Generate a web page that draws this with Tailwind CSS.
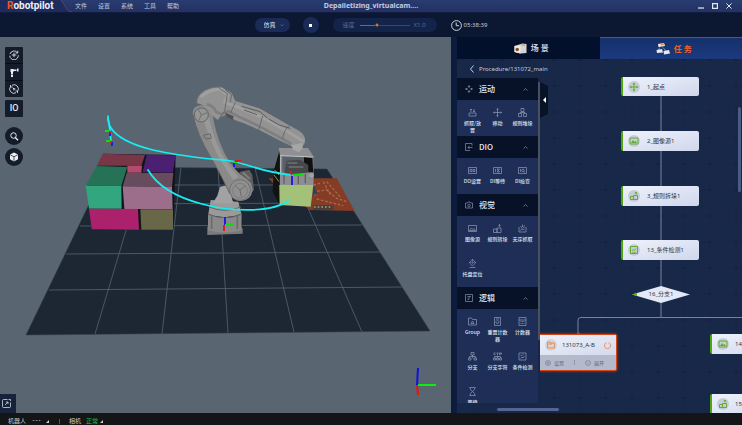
<!DOCTYPE html>
<html lang="zh-CN">
<head>
    <meta charset="UTF-8">
    <meta name="viewport" content="width=device-width, initial-scale=1.0">
    <title>Robotpilot</title>
    <script src="https://cdn.jsdelivr.net/npm/@tailwindcss/browser@4"></script>
</head>
<body class="h-screen flex flex-col overflow-hidden bg-[#0c1834] text-[6px] leading-[8px] text-[#c3cbdc] font-['Noto_Sans','Noto_Sans_CJK_SC',sans-serif]">

    <!-- Barra de título y menú -->
    <header class="h-[13px] shrink-0 grid grid-cols-[1fr_auto_1fr] items-center bg-linear-to-b from-[#283c70] to-[#243163] border-b border-[#111c40]">
        <div class="flex items-center h-full">
            <div class="relative w-[75px] h-full flex items-center pl-[7px]">
                <svg class="absolute inset-0 w-full h-full" viewBox="0 0 75 12" preserveAspectRatio="none">
                    <path d="M0 0H61L69 12H0z" fill="#1d2c5d"/>
                    <path d="M61 0L67 9Q69 12 72 12" fill="none" stroke="#6a4763" stroke-width=".8"/>
                </svg>
                <h1 class="relative font-['Roboto'] font-bold text-[10px] leading-[10px] text-[#eef1f8]"><span class="text-[#f0591d]">R</span>obotpilot</h1>
            </div>
            <nav class="flex gap-[11px] font-['Noto_Sans_CJK_SC']">
                <a href="#">文件</a>
                <a href="#">设置</a>
                <a href="#">系统</a>
                <a href="#">工具</a>
                <a href="#">帮助</a>
            </nav>
        </div>
        <h2 class="font-['Noto_Sans'] font-bold text-[7px] text-[#c2cbe8]">Depalletizing_virtualcam....</h2>
        <div class="flex justify-end items-center gap-2 pr-[10px]">
            <button aria-label="最小化"><svg class="w-[6px] h-[6px]" viewBox="0 0 6 6"><path d="M0 5H6" stroke="#e3e8f5" stroke-width="1.2"/></svg></button>
            <button aria-label="最大化"><svg class="w-[6px] h-[6px]" viewBox="0 0 6 6"><path d="M.6.6H5.4V5.4H.6z" fill="none" stroke="#e3e8f5" stroke-width="1.2"/></svg></button>
            <button aria-label="关闭"><svg class="w-[6px] h-[6px]" viewBox="0 0 6 6"><path d="M.4.4L5.6 5.6M5.6.4L.4 5.6" stroke="#e3e8f5"/></svg></button>
        </div>
    </header>

    <!-- Controles de simulación -->
    <div class="h-6 shrink-0 flex justify-center items-center bg-[#0c1831]">
        <div class="relative">
            <select aria-label="模式" class="block w-[35px] h-[14px] appearance-none rounded-full bg-[#1a2b57] pl-[9px] text-[6px] text-[#e2e7f3] font-['Noto_Sans_CJK_SC']">
                <option>仿真</option>
            </select>
            <svg class="absolute right-[6px] top-[6px] w-[4px] h-[3px] pointer-events-none" viewBox="0 0 4 3"><path d="M.5.5L2 2L3.5.5" fill="none" stroke="#60709a" stroke-width=".7"/></svg>
        </div>
        <button aria-label="停止" class="ml-[13px] w-4 h-4 rounded-full bg-[#1a2b57] flex items-center justify-center">
            <span class="w-[3px] h-[3px] bg-white"></span>
        </button>
        <div class="ml-[14px] w-[104px] h-[14px] rounded-full bg-[#14234a] flex items-center pl-[10px] pr-[11px] text-[#5b6b90]">
            <label for="speed" class="font-['Noto_Sans_CJK_SC']">速度</label>
            <input id="speed" type="range" value="34" class="ml-[5px] mr-1 flex-1 min-w-0 h-px appearance-none bg-linear-to-r from-[#a06026] from-34% to-[#37486c] to-34% [&::-webkit-slider-thumb]:appearance-none [&::-webkit-slider-thumb]:w-[4px] [&::-webkit-slider-thumb]:h-[4px] [&::-webkit-slider-thumb]:rounded-full [&::-webkit-slider-thumb]:bg-[#d99a4c] [&::-webkit-slider-thumb]:border [&::-webkit-slider-thumb]:border-[#5a4330]">
            <span>X1.0</span>
        </div>
        <svg class="ml-[14px] w-[11px] h-[11px]" viewBox="0 0 11 11" fill="none" stroke="#ccd2de"><circle cx="5.500" cy="5.500" r="4.900"/><path d="M5.200 2.500V5.700H8"/></svg>
        <time class="ml-[2px]">05:38:39</time>
    </div>

    <main class="flex-1 min-h-0 flex">
        <!-- Vista 3D -->
        <section class="relative flex-1 min-w-0 bg-[#596570]">
            <svg class="absolute inset-0 w-full h-full" viewBox="0 37 451 376" preserveAspectRatio="xMidYMid slice">
                <path d="M107 167L327 169L430 331L26 335z" fill="#1d2733"/>
                <g stroke="#566470" stroke-width=".8" fill="none">
                    <path d="M145 167L95 334M181 167L162 334M218 168L228 333M255 168L294 332M291 169L362 332"/>
                    <path d="M98 185H337M90 204L348 203M80 226L362 225M66 254L380 252M49 290L403 287"/>
                    <path d="M107 167L327 169L430 331L26 335z" stroke="#35414d" stroke-width=".5"/>
                </g>
                <!-- Cajas apiladas -->
                <g transform="translate(0 40) scale(.33333)">
                    <path d="M310 341L527 345L520 568L275 568L262 440z" fill="#11131a"/>
                    <path d="M309 341L435 345L424 377L290 377z" fill="#793649"/>
                    <path d="M382 377H426L424 398H382z" fill="#b44a6d"/>
                    <path d="M440 345L527 346L518 398L428 396z" fill="#4b2073"/>
                    <path d="M290 378L382 381L364 438L257 437z" fill="#267257"/>
                    <path d="M257 437L364 438L365 506L267 506z" fill="#32a67e"/>
                    <path d="M380 398L520 399L516 441L368 439z" fill="#674c5d"/>
                    <path d="M368 439L516 441L518 507L373 507z" fill="#9c6e8c"/>
                    <path d="M267 506L414 507L417 569L275 568z" fill="#ab216c"/>
                    <path d="M421 508H519V569H424z" fill="#686747"/>
                </g>
                <!-- Robot y pinza -->
                <g transform="translate(180 75) scale(.33333)" stroke-linejoin="round">
                    <path d="M265 310L470 310L524 408L390 405L285 330z" fill="#853c25"/>
                    <path d="M398 350L440 345L470 370L500 380M410 372L490 392M430 320L450 358M400 330L420 325M440 320L480 365" stroke="#a8694c" stroke-width="4" stroke-dasharray="8 5" fill="none"/>
                    <path d="M398 390H460V404L400 405z" fill="#46403a"/>
                    <path d="M402 396H456M404 345V365" stroke="#a39c83" stroke-width="5" stroke-dasharray="5 6"/>
                    <path d="M400 330L412 355L398 362z" fill="#2b4163"/>
                    <path d="M300 222L281 288L278 350L298 388z" fill="#10130f"/>
                    <path d="M284 285L297 300M282 300L297 320" stroke="#7f986c" stroke-width="3"/>
                    <path d="M300 219H384L401 245V332H300z" fill="#717376"/>
                    <path d="M308 243H372V290H308z" fill="#58616a"/>
                    <path d="M372 246L397 249L400 300L372 283z" fill="#0f1012"/>
                    <path d="M296 219H384L401 245L300 242z" fill="#8f9093"/>
                    <path d="M300 242L400 246" stroke="#c4c4c4" stroke-width="3"/>
                    <path d="M302 244V330" stroke="#b3b3b3" stroke-width="4"/>
                    <path d="M320 257L360 254L385 270V300H312z" fill="#45474b"/>
                    <path d="M322 264H352M326 276H370" stroke="#6f7175" stroke-width="4"/>
                    <path d="M300 300L400 292V332H300z" fill="#8d8e91"/>
                    <path d="M312 298V326M355 302V328M376 296V325M390 290V310" stroke="#5d5f63" stroke-width="4"/>
                    <circle cx="394" cy="301" r="8" fill="#a0a0a0"/>
                    <path d="M298 330L400 330L392 395L299 390z" fill="#a3c179"/>
                    <!-- base -->
                    <path d="M82 455L95 448H180L188 462V476L82 480z" fill="#7a7a7a"/>
                    <path d="M84 418Q135 440 185 416L184 466Q135 480 84 466z" fill="#898989"/>
                    <path d="M92 375L175 380L184 416Q135 437 85 417z" fill="#9a9a9a"/>
                    <path d="M88 396Q133 416 183 396M85 418Q135 438 185 418" fill="none" stroke="#666" stroke-width="3"/>
                    <path d="M95 424V462M172 424V462" stroke="#6b6b6b" stroke-width="5"/>
                    <path d="M120 335L145 330L160 385H98L112 362z" fill="#a2a2a2"/>
                    <path d="M180 290L208 284L217 300L222 345L200 370L165 330z" fill="#5e5e5e"/>
                    <path d="M188 292L210 312M183 302L214 328" stroke="#858585" stroke-width="5"/>
                    <!-- brazo inferior -->
                    <path d="M38 116Q37 94 62 91Q96 90 98 120Q107 175 125 215Q140 258 186 304Q216 318 218 345Q213 378 180 378Q157 376 149 356Q130 312 92 246Q53 183 38 116z" fill="#8a8a8a"/>
                    <path d="M86 125Q99 178 116 217Q133 260 176 306L160 315Q120 260 97 207Q80 165 72 140z" fill="#999"/>
                    <path d="M38 116Q53 183 92 246Q130 312 149 356" fill="none" stroke="#666" stroke-width="3"/>
                    <circle cx="64" cy="120" r="21" fill="#959595" stroke="#666" stroke-width="3"/>
                    <path d="M64 120L55 103M64 120L81 113M64 120L56 137" stroke="#707070" stroke-width="3"/>
                    <path d="M70 181L90 176L94 190L78 192z" fill="none" stroke="#666" stroke-width="3"/>
                    <circle cx="180" cy="345" r="31" fill="#909090" stroke="#707070" stroke-width="3"/>
                    <circle cx="180" cy="347" r="22" fill="none" stroke="#727272" stroke-width="2"/>
                    <path d="M180 345L165 331M180 345L196 333M180 345L184 365" stroke="#6c6c6c" stroke-width="3"/>
                    <!-- brazo superior -->
                    <path d="M50 84Q48 62 75 45Q99 32 124 36L155 54L166 78L238 100L322 148L357 167Q378 181 375 200Q373 214 355 219L335 214L302 198L238 165L192 145L164 135L142 118L122 126L114 136L94 119Q82 91 50 84z" fill="#939393"/>
                    <path d="M62 66Q85 44 122 42L143 60L134 82L162 92L236 122L320 168L372 200" fill="none" stroke="#a0a0a0" stroke-width="9"/>
                    <path d="M80 88Q99 90 109 111L124 118L145 108L176 125L238 154L301 188L334 207" fill="none" stroke="#7f7f7f" stroke-width="8"/>
                    <path d="M118 40L142 56L134 108L114 135M135 43L155 59L151 82M166 82L151 115M248 123L236 164M327 152Q310 168 308 192" fill="none" stroke="#696969" stroke-width="3"/>
                    <path d="M185 94L240 110L263 130M266 132L300 151L331 160M192 105L231 119" fill="none" stroke="#5c5c5c" stroke-width="3"/>
                    <path d="M134 112L161 124L158 134L142 126z" fill="#505050"/>
                    <path d="M50 84Q48 62 75 45Q99 32 124 36" fill="none" stroke="#666" stroke-width="3"/>
                    <path d="M334 211L368 203V220L357 232L340 225z" fill="#a6a6a6"/>
                </g>
                <!-- Trayectoria -->
                <g fill="none" stroke="#17eef2" stroke-width="1.7" stroke-linecap="round">
                    <path d="M108 116C108 121 109 125 111 128C124 148 170 154 202 158C218 160 228 160 236 162C256 167 266 173 293 175"/>
                    <path d="M108 118L110 130L111 142"/>
                    <path d="M148 170C158 187 179 198 202 204C231 212 273 213 289 200"/>
                </g>
                <!-- Ejes -->
                <g fill="none" stroke-width="1.8">
                    <path d="M110 132V136M112 142V146M225 217V226M234 162V167M292 176V185" stroke="#1414e6"/>
                    <path d="M105 131H110M106 141H111M225 225H233M233 162H237M293 175H303" stroke="#0be00b"/>
                    <path d="M224 225V231M235 161H241M290 171L292 175M110 131V133M111 141V143" stroke="#e81414"/>
                    <path d="M418 385H436" stroke="#0cef0c" stroke-width="2"/>
                    <path d="M417 385L418 368" stroke="#1111dd" stroke-width="2"/>
                    <path d="M417 385L418 395" stroke="#ef1111" stroke-width="2"/>
                </g>
            </svg>

            <div class="absolute left-[5px] top-[10px] flex flex-col items-center gap-[3px]">
                <div class="w-[18px] rounded-[1px] bg-[#141c2b] divide-y divide-[#080d18]">
                    <button aria-label="旋转视图" class="w-full h-[17px] flex items-center justify-center"><svg class="w-[10px] h-[10px]" viewBox="0 0 20 20" fill="none" stroke="#e6e8ec" stroke-width="1.700"><path d="M17 5.500A8.500 8.500 0 0 0 2 8M1.500 11.500A8.500 8.500 0 0 0 18.500 10.500M17.500 1.500V6H13"/><path d="M10 5.500V14.500M5.500 10H14.500"/></svg></button>
                    <button aria-label="机器人" class="w-full h-[17px] flex items-center justify-center"><svg class="w-[9px] h-[9px]" viewBox="0 0 18 18" fill="#eceef1"><path d="M1 2H7V8H1zM7 3H13V6H7zM14 1H17V7H14zM2 8H6V12H2zM2 13H6V18H2z"/></svg></button>
                    <button aria-label="重置视图" class="w-full h-[16px] flex items-center justify-center"><svg class="w-[10px] h-[10px]" viewBox="0 0 20 20" fill="none" stroke="#e6e8ec" stroke-width="1.700"><path d="M6 2.500A8.500 8.500 0 0 1 17 15M14 17.500A8.500 8.500 0 0 1 3 5M3 2V6H7M17 18V14H13"/><path d="M7 7L14 10L11 11L10 14z" fill="#e6e8ec" stroke="none"/></svg></button>
                </div>
                <button class="w-[18px] h-[17px] rounded-[1px] bg-[#141c2b] font-['Roboto'] font-medium text-[9px] leading-[17px] text-[#e6e8ec]">IO</button>
                <button aria-label="搜索" class="mt-[7px] w-[18px] h-[18px] rounded-full bg-[#141c2b] flex items-center justify-center"><svg class="w-[9px] h-[9px]" viewBox="0 0 18 18"><circle cx="7" cy="7" r="5.500" fill="none" stroke="#e6e8ec" stroke-width="2"/><path d="M10.500 11L16 16.500" stroke="#e6e8ec" stroke-width="3"/></svg></button>
                <button aria-label="模型" class="w-[18px] h-[18px] rounded-full bg-[#141c2b] flex items-center justify-center"><svg class="w-[10px] h-[10px]" viewBox="0 0 20 20"><path d="M10 1L18 5V14.500L10 19L2 14.500V5z" fill="#eceef1"/><path d="M2.500 5.500L10 9.500L17.500 5.500M10 9.500V18.500" stroke="#141c2b" stroke-width="1.500" fill="none"/></svg></button>
            </div>

            <button aria-label="展开视图" class="absolute left-0 bottom-0 w-4 h-[19px] bg-[#17233a] flex items-center justify-center pr-[3px]"><svg class="w-[9px] h-[9px]" viewBox="0 0 18 18" fill="none" stroke="#d5d9e0" stroke-width="1.600"><path d="M11 1H3Q1 1 1 3V15Q1 17 3 17H15Q17 17 17 15V7M13 1H17V4"/><path d="M6 12L12 6M8 6H12V10"/></svg></button>
        </section>

        <!-- Panel de tareas -->
        <section class="w-[291px] shrink-0 pl-[6px] bg-[#0d1c3c] flex flex-col">
            <div class="h-[22px] shrink-0 grid grid-cols-2 font-['Noto_Sans_CJK_SC'] font-bold text-[8px] leading-[10px]">
                <a href="#" class="flex items-center justify-center gap-[4px] pl-[6px] bg-[#03102c] text-[#c9d0de]">
                    <svg class="w-[13px] h-[11px]" viewBox="0 0 26 22"><path d="M1 6L17 1L25 2V20L13 21L1 18z" fill="#d5d4d2"/><path d="M1 6L13 5V21L1 18z" fill="#eeeae4"/><circle cx="6.500" cy="13" r="3.500" fill="#7c4c28"/><path d="M15 4H22" stroke="#c48b5d" stroke-width="2"/></svg>
                    <span>场 景</span>
                </a>
                <a href="#" class="flex items-center justify-center gap-[4px] pl-[6px] bg-linear-to-b from-[#15306b] to-[#1b3a7e] border-t border-[#7b4c4d] text-[#f0611f]">
                    <svg class="w-[14px] h-[12px]" viewBox="0 0 28 24"><path d="M7 9L5 15M14 9L20 16" stroke="#a6adbd" stroke-width="1.500"/><path d="M4 2L16 0L18 6L5 8z" fill="#f2ece6"/><path d="M9 2L16 1L17 4L10 5z" fill="#df8a42"/><path d="M1 14L12 12L14 19L2 20z" fill="#e9e9ec"/><path d="M15 16L26 14L28 21L16 23z" fill="#e9e9ec"/></svg>
                    <span>任 务</span>
                </a>
            </div>

            <div class="relative flex-1 min-h-0 overflow-hidden bg-[#182848]">
                <!-- Diagrama de flujo -->
                <div class="absolute inset-0 text-[#30343d]">
                    <svg class="absolute inset-0 w-full h-full">
                        <defs>
                            <pattern id="grid" x="6" y="14" width="26" height="26" patternUnits="userSpaceOnUse">
                                <path d="M13 0V26M0 13H26" stroke="#172645" stroke-width="1"/>
                                <rect x="12" y="12" width="2" height="2" fill="#13213f"/>
                            </pattern>
                        </defs>
                        <rect width="100%" height="100%" fill="url(#grid)"/>
                        <path d="M204 30V258.500M121 276V261Q121 258.500 124 258.500H285" fill="none" stroke="#75839f"/>
                        <path d="M175 235.500L204 227L233 235.500L204 244z" fill="#e3e8f6"/>
                        <path d="M175 235.500L180 234V237z" fill="#55b112"/>
                    </svg>

                    <div class="absolute left-[164px] top-[18px] w-[78px] h-[19px] rounded-[2px] border-l-2 border-[#4da80d] bg-linear-to-br from-[#eef2fc] to-[#cfd7ec] flex items-center pl-[5px] gap-[7px]">
                        <svg class="w-[12px] h-[12px]" viewBox="0 0 24 24"><circle cx="12" cy="12" r="12" fill="#c6ccd8"/><path d="M12 4V20M4 12H20" stroke="#65ac2a" stroke-width="2"/><path d="M9 7L12 3L15 7zM9 17L12 21L15 17zM7 9L3 12L7 15zM17 9L21 12L17 15z" fill="#65ac2a"/></svg>
                        <span>1_起点</span>
                    </div>
                    <div class="absolute left-[164px] top-[72px] w-[78px] h-5 rounded-[2px] border-l-2 border-[#4da80d] bg-linear-to-br from-[#eef2fc] to-[#cfd7ec] flex items-center pl-[5px] gap-[7px]">
                        <svg class="w-[12px] h-[12px]" viewBox="0 0 24 24"><circle cx="12" cy="12" r="12" fill="#c6ccd8"/><path d="M4 6H20V18H4z" fill="none" stroke="#65ac2a" stroke-width="2"/><path d="M6 16L10 10L13 14L15 12L18 16z" fill="#65ac2a"/></svg>
                        <span>2_图像源1</span>
                    </div>
                    <div class="absolute left-[164px] top-[127px] w-[78px] h-5 rounded-[2px] border-l-2 border-[#4da80d] bg-linear-to-br from-[#eef2fc] to-[#cfd7ec] flex items-center pl-[5px] gap-[7px]">
                        <svg class="w-[12px] h-[12px]" viewBox="0 0 24 24"><circle cx="12" cy="12" r="12" fill="#c6ccd8"/><path d="M5 13H11V19H5zM11 11H19V19H11zM16 9V4M13.500 6.500L16 4L18.500 6.500" fill="none" stroke="#65ac2a" stroke-width="2"/></svg>
                        <span>3_规则拆垛1</span>
                    </div>
                    <div class="absolute left-[164px] top-[181px] w-[78px] h-5 rounded-[2px] border-l-2 border-[#4da80d] bg-linear-to-br from-[#eef2fc] to-[#cfd7ec] flex items-center pl-[5px] gap-[7px]">
                        <svg class="w-[12px] h-[12px]" viewBox="0 0 24 24"><circle cx="12" cy="12" r="12" fill="#c6ccd8"/><path d="M5 5H19V19H5z" fill="none" stroke="#65ac2a" stroke-width="2"/><path d="M8 14L11 10L13 13L16 9M8 16.500H16" fill="none" stroke="#65ac2a" stroke-width="1.500"/></svg>
                        <span>13_条件检测1</span>
                    </div>
                    <span class="absolute left-[175px] top-[231px] w-[58px] text-center">16_分支1</span>

                    <div class="absolute left-[76px] top-[275px] w-[84px] h-[37px] rounded-[2px] border border-[#d4471b] shadow-[0_0_3px_#c2411c] bg-[#b3bacb] flex flex-col">
                        <div class="h-5 bg-linear-to-br from-[#eef2fc] to-[#d4daeb] flex items-center pl-[11px] pr-[5px] gap-[5px]">
                            <svg class="w-[12px] h-[12px]" viewBox="0 0 24 24"><circle cx="12" cy="12" r="12" fill="#d3d4dc"/><path d="M5 6H10L12 8H19V18H5zM5 10H14V8" fill="none" stroke="#ef8f4c" stroke-width="2"/></svg>
                            <span class="flex-1">131073_A-B</span>
                            <svg class="w-[7px] h-[7px]" viewBox="0 0 14 14"><path d="M9 1.500A6 6 0 1 1 5 1.500" fill="none" stroke="#e58558" stroke-width="1.800"/></svg>
                        </div>
                        <div class="flex-1 flex items-center pl-[11px] text-[#646b79] text-[5px]">
                            <button class="flex items-center gap-[3px]"><svg class="w-[6px] h-[6px]" viewBox="0 0 12 12" fill="none" stroke="#7d8391" stroke-width="1.500"><circle cx="6" cy="6" r="5"/><circle cx="6" cy="6" r="2"/></svg>设置</button>
                            <span class="ml-[10px] w-px h-[5px] bg-[#8f96a6]"></span>
                            <button class="ml-[10px] flex items-center gap-[3px]"><svg class="w-[6px] h-[6px]" viewBox="0 0 12 12" fill="none" stroke="#7d8391" stroke-width="1.500"><circle cx="6" cy="6" r="5"/><path d="M3.500 5L6 7.500L8.500 5"/></svg>展开</button>
                        </div>
                    </div>
                    <span class="absolute left-[120px] top-[274px] w-[3px] h-[2px] bg-[#cf4317]"></span>

                    <div class="absolute left-[253px] top-[275px] w-[78px] h-5 rounded-[2px] border-l-2 border-[#4da80d] bg-linear-to-br from-[#eef2fc] to-[#cfd7ec] flex items-center pl-[5px] gap-[6px]">
                        <svg class="w-[12px] h-[12px]" viewBox="0 0 24 24"><circle cx="12" cy="12" r="12" fill="#c6ccd8"/><path d="M4 6H20V18H4z" fill="none" stroke="#65ac2a" stroke-width="2"/><path d="M6 16L10 10L13 14L15 12L18 16z" fill="#65ac2a"/></svg>
                        <span>14</span>
                    </div>
                    <div class="absolute left-[253px] top-[335px] w-[78px] h-5 rounded-[2px] border-l-2 border-[#4da80d] bg-linear-to-br from-[#eef2fc] to-[#cfd7ec] flex items-center pl-[5px] gap-[6px]">
                        <svg class="w-[12px] h-[12px]" viewBox="0 0 24 24"><circle cx="12" cy="12" r="12" fill="#c6ccd8"/><path d="M5 13H11V19H5zM11 11H19V19H11zM16 9V4M13.500 6.500L16 4L18.500 6.500" fill="none" stroke="#65ac2a" stroke-width="2"/></svg>
                        <span>15</span>
                    </div>
                </div>

                <div class="relative h-full flex flex-col pb-[10px] pointer-events-none">
                    <div class="h-[19px] shrink-0 flex items-center gap-[5px] pl-[13px]">
                        <button aria-label="返回"><svg class="w-[4px] h-[8px]" viewBox="0 0 4 8"><path d="M3.500.5L.5 4L3.500 7.500" fill="none" stroke="#c6cee0"/></svg></button>
                        <span>Procedure/131072_main</span>
                    </div>

                    <!-- Paleta de bloques -->
                    <div class="flex-1 min-h-0 flex">
                        <aside class="w-[81px] overflow-hidden bg-[#1f2e56] text-[5px] leading-[7px] text-[#dbe1ec] font-['Noto_Sans_CJK_SC'] font-medium">
                            <h3 class="h-[22px] flex items-center bg-[#071228] pl-2 pr-[10px] text-[8px] leading-[10px] text-[#e4e8f1]">
                                <svg class="w-[8px] h-[8px] mr-[6px]" viewBox="0 0 16 16" fill="none" stroke="#7d8aa5" stroke-width="1.500"><path d="M6 3L8 1L10 3zM6 13L8 15L10 13zM3 6L1 8L3 10zM13 6L15 8L13 10zM8 3V6M8 10V13M3 8H6M10 8H13"/></svg>
                                <span class="flex-1">运动</span>
                                <svg class="w-[5px] h-[3px]" viewBox="0 0 5 3"><path d="M.5 2.500L2.500.5L4.500 2.500" fill="none" stroke="#7482a0" stroke-width=".8"/></svg>
                            </h3>
                            <div class="grid grid-cols-3 auto-rows-[35px] px-[3px] pb-px text-center">
                                <div class="pt-2 px-[2px] flex flex-col items-center gap-[2px]"><svg class="w-[9px] h-[9px] shrink-0" viewBox="0 0 18 18" fill="none" stroke="#8e9bb7" stroke-width="1.400"><path d="M2 10V16H16V10zM6 8V2M4 4L6 2L8 4M12 2V8M10 6L12 8L14 6"/></svg>抓取/放置</div>
                                <div class="pt-2 flex flex-col items-center gap-[2px]"><svg class="w-[9px] h-[9px] shrink-0" viewBox="0 0 18 18" fill="none" stroke="#8e9bb7" stroke-width="1.400"><path d="M9 1V17M1 9H17M7 3L9 1L11 3M7 15L9 17L11 15M3 7L1 9L3 11M15 7L17 9L15 11"/></svg>移动</div>
                                <div class="pt-2 whitespace-nowrap flex flex-col items-center gap-[2px]"><svg class="w-[9px] h-[9px] shrink-0" viewBox="0 0 18 18" fill="none" stroke="#8e9bb7" stroke-width="1.400"><path d="M6 1H12V7H6zM1 11H7V17H1zM11 11H17V17H11zM9 7V9M4 11V9H14V11"/></svg>规则堆垛</div>
                            </div>

                            <h3 class="h-[22px] flex items-center bg-[#071228] pl-2 pr-[10px] text-[8px] leading-[10px] text-[#e4e8f1]">
                                <svg class="w-[8px] h-[8px] mr-[6px]" viewBox="0 0 16 16" fill="none" stroke="#7d8aa5" stroke-width="1.500"><path d="M14 5V1H1V15H10M15 9H6M9 6L6 9L9 12"/></svg>
                                <span class="flex-1">DIO</span>
                                <svg class="w-[5px] h-[3px]" viewBox="0 0 5 3"><path d="M.5 2.500L2.500.5L4.500 2.500" fill="none" stroke="#7482a0" stroke-width=".8"/></svg>
                            </h3>
                            <div class="grid grid-cols-3 auto-rows-[35px] px-[3px] pb-px text-center">
                                <div class="pt-2 flex flex-col items-center gap-[2px]"><svg class="w-[9px] h-[9px] shrink-0" viewBox="0 0 18 18" fill="none" stroke="#8e9bb7" stroke-width="1.400"><path d="M1 3H17V15H1zM4 7H8V11H4zM10 7H14V11H10z"/></svg>DO设置</div>
                                <div class="pt-2 flex flex-col items-center gap-[2px]"><svg class="w-[9px] h-[9px] shrink-0" viewBox="0 0 18 18" fill="none" stroke="#8e9bb7" stroke-width="1.400"><path d="M1 3H17V15H1zM5 6V12M8 6H13L8 12H13z"/></svg>DI等待</div>
                                <div class="pt-2 flex flex-col items-center gap-[2px]"><svg class="w-[9px] h-[9px] shrink-0" viewBox="0 0 18 18" fill="none" stroke="#8e9bb7" stroke-width="1.400"><path d="M1 3H17V15H1zM5 6V12M14 13L11.500 11"/><circle cx="10" cy="9" r="2.500"/></svg>DI检查</div>
                            </div>

                            <h3 class="h-[22px] flex items-center bg-[#071228] pl-2 pr-[10px] text-[8px] leading-[10px] text-[#e4e8f1]">
                                <svg class="w-[8px] h-[8px] mr-[6px]" viewBox="0 0 16 16" fill="none" stroke="#7d8aa5" stroke-width="1.500"><path d="M1 4H5L6 2H10L11 4H15V14H1z"/><circle cx="8" cy="9" r="2.500"/></svg>
                                <span class="flex-1">视觉</span>
                                <svg class="w-[5px] h-[3px]" viewBox="0 0 5 3"><path d="M.5 2.500L2.500.5L4.500 2.500" fill="none" stroke="#7482a0" stroke-width=".8"/></svg>
                            </h3>
                            <div class="grid grid-cols-3 auto-rows-[35px] px-[3px] pb-px text-center">
                                <div class="pt-2 flex flex-col items-center gap-[2px]"><svg class="w-[9px] h-[9px] shrink-0" viewBox="0 0 18 18" fill="none" stroke="#8e9bb7" stroke-width="1.400"><path d="M1 3H17V15H1zM3 13L7 8L10 11L12 9L15 13z"/></svg>图像源</div>
                                <div class="pt-2 whitespace-nowrap flex flex-col items-center gap-[2px]"><svg class="w-[9px] h-[9px] shrink-0" viewBox="0 0 18 18" fill="none" stroke="#8e9bb7" stroke-width="1.400"><path d="M1 10H8V17H1zM8 8H16V17H8zM13 6V1M11 3L13 1L15 3"/></svg>规则拆垛</div>
                                <div class="pt-2 whitespace-nowrap flex flex-col items-center gap-[2px]"><svg class="w-[9px] h-[9px] shrink-0" viewBox="0 0 18 18" fill="none" stroke="#8e9bb7" stroke-width="1.400"><path d="M2 6V16H16V6M5 4L8 8M9 1V6M13 3L11 8M5 13L8 9L10 12L13 10"/></svg>无序抓取</div>
                                <div class="pt-2 whitespace-nowrap flex flex-col items-center gap-[2px]"><svg class="w-[9px] h-[9px] shrink-0" viewBox="0 0 18 18" fill="none" stroke="#8e9bb7" stroke-width="1.400"><path d="M9 0V3M2 7H4M14 7H16M9 14L4.500 9.500A5 5 0 1 1 13.500 9.500zM3 17H15"/><circle cx="9" cy="7" r="1.500"/></svg>托盘定位</div>
                            </div>

                            <h3 class="h-[22px] flex items-center bg-[#071228] pl-2 pr-[10px] text-[8px] leading-[10px] text-[#e4e8f1]">
                                <svg class="w-[8px] h-[8px] mr-[6px]" viewBox="0 0 16 16" fill="none" stroke="#7d8aa5" stroke-width="1.500"><path d="M1 1H15V15H1zM5 5H12M5 8H10M5 11H8"/></svg>
                                <span class="flex-1">逻辑</span>
                                <svg class="w-[5px] h-[3px]" viewBox="0 0 5 3"><path d="M.5 2.500L2.500.5L4.500 2.500" fill="none" stroke="#7482a0" stroke-width=".8"/></svg>
                            </h3>
                            <div class="grid grid-cols-3 auto-rows-[35px] px-[3px] pb-px text-center">
                                <div class="pt-2 flex flex-col items-center gap-[2px]"><svg class="w-[9px] h-[9px] shrink-0" viewBox="0 0 18 18" fill="none" stroke="#8e9bb7" stroke-width="1.400"><path d="M1 2H7L9 5H17V16H1zM6 13L9 8L12 13z"/></svg>Group</div>
                                <div class="pt-2 px-[2px] flex flex-col items-center gap-[2px]"><svg class="w-[9px] h-[9px] shrink-0" viewBox="0 0 18 18" fill="none" stroke="#8e9bb7" stroke-width="1.400"><path d="M3 1H15V17H3zM6 4H12M6 9L8 7M6 9A3 3 0 1 0 9 7"/></svg>重置计数器</div>
                                <div class="pt-2 flex flex-col items-center gap-[2px]"><svg class="w-[9px] h-[9px] shrink-0" viewBox="0 0 18 18" fill="none" stroke="#8e9bb7" stroke-width="1.400"><path d="M2 1H16V17H2zM2 6H16M5 9H7M8 9H10M11 9H13M5 13H7M8 13H10M11 13H13"/></svg>计数器</div>
                                <div class="pt-2 flex flex-col items-center gap-[2px]"><svg class="w-[9px] h-[9px] shrink-0" viewBox="0 0 18 18" fill="none" stroke="#8e9bb7" stroke-width="1.400"><path d="M6 1H12V6H6zM9 6V12M3 12V9H15V12M1 12H6V16H1zM12 12H17V16H12z"/></svg>分支</div>
                                <div class="pt-2 whitespace-nowrap flex flex-col items-center gap-[2px]"><svg class="w-[9px] h-[9px] shrink-0" viewBox="0 0 18 18" fill="none" stroke="#8e9bb7" stroke-width="1.400"><path d="M1 2H5M1 5H5M7 2H11M9 2V6M13 6V2H17V4H13M9 7V12M3 12V9H15V12M1 12H5V16H1zM7 12H11V16H7zM13 12H17V16H13z"/></svg>分支字符</div>
                                <div class="pt-2 whitespace-nowrap flex flex-col items-center gap-[2px]"><svg class="w-[9px] h-[9px] shrink-0" viewBox="0 0 18 18" fill="none" stroke="#8e9bb7" stroke-width="1.400"><path d="M2 2H16V16H2zM5 6L7 8L11 4M5 13L8 10L10 12L13 8"/></svg>条件检测</div>
                                <div class="pt-2 flex flex-col items-center gap-[2px]"><svg class="w-[9px] h-[9px] shrink-0" viewBox="0 0 18 18" fill="none" stroke="#8e9bb7" stroke-width="1.400"><path d="M3 1H15M3 17H15M4 1Q4 6 9 9Q14 6 14 1M4 17Q4 12 9 9Q14 12 14 17"/></svg>等待</div>
                            </div>
                        </aside>
                        <div class="w-[2px] bg-[#172747] pt-1"><div class="h-[258px] bg-[#4a5060]"></div></div>
                        <svg class="mt-1 w-[9px] h-[36px]" viewBox="0 0 9 36"><path d="M0 0L8 4V32L0 36z" fill="#081327"/><path d="M6 15V21L3 18z" fill="#fff"/></svg>
                    </div>
                </div>

                <span class="absolute right-[1px] top-[48px] w-[3px] h-[85px] rounded-full bg-[#4a5b87]"></span>
                <span class="absolute left-[40px] bottom-[2px] w-[62px] h-[3px] rounded-full bg-[#566590]"></span>
            </div>
        </section>
    </main>

    <!-- Barra de estado -->
    <footer class="h-3 shrink-0 flex items-center pt-[4px] pl-2 bg-[#141516] text-[#c9c9c9] font-['Noto_Sans_CJK_SC']">
        <span>机器人</span>
        <span class="ml-[6px] font-['Liberation_Mono'] font-bold text-[5px]">---</span>
        <svg class="ml-[5px] w-[3px] h-[3px]" viewBox="0 0 3 3"><path d="M3 0V3H0z" fill="#d8cfc5"/></svg>
        <span class="ml-[10px] w-px h-[5px] bg-[#555]"></span>
        <span class="ml-[9px]">相机</span>
        <span class="ml-[5px] text-[#1fc04c]">正常</span>
        <svg class="ml-[2px] w-[3px] h-[3px]" viewBox="0 0 3 3"><path d="M3 0V3H0z" fill="#d8cfc5"/></svg>
    </footer>

</body>
</html>
